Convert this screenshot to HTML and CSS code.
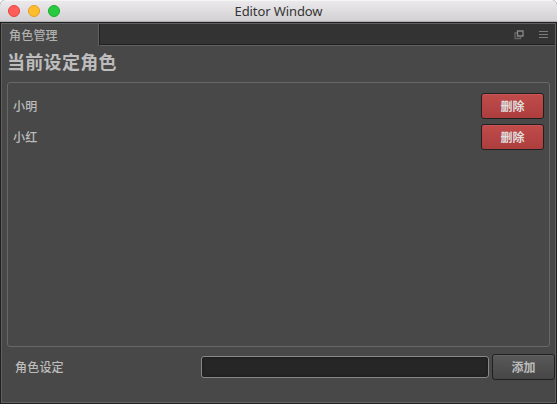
FILE: index.html
```html
<!DOCTYPE html>
<html lang="zh-CN">
<head>
<meta charset="utf-8">
<title>Editor Window</title>
<link rel="stylesheet" href="styles.css">
</head>
<body>
<div class="window">
  <header class="titlebar">
    <div class="lights"><i class="light close"></i><i class="light minimize"></i><i class="light maximize"></i></div>
    <span class="title">Editor Window</span>
  </header>
  <main class="dock">
    <nav class="tabs">
      <div class="tab">角色管理</div>
      <div class="tools">
        <svg width="10" height="10" viewBox="0 0 10 10" fill="none"><path d="M3 3H1V8.5H6.5V7" stroke="#646464" stroke-width="1.3"/><path d="M3.5 1H9V6H3.5Z" stroke="#888" stroke-width="1.3"/></svg>
        <svg width="9" height="8" viewBox="0 0 9 8"><path d="M0 .5H9M0 3.5H9M0 6.5H9" stroke="#7c7c7c"/></svg>
      </div>
    </nav>
    <section class="panel">
      <h1>当前设定角色</h1>
      <ul class="list">
        <li><span>小明</span><button class="button red">删除</button></li>
        <li><span>小红</span><button class="button red">删除</button></li>
      </ul>
      <div class="form">
        <label for="role">角色设定</label>
        <input id="role" type="text">
        <button class="button">添加</button>
      </div>
    </section>
  </main>
</div>
</body>
</html>
```
FILE: styles.css
```css
* { box-sizing: border-box; }
body {
  margin: 0;
  background: #fff;
  font: 12px/18px "Noto Sans CJK SC", sans-serif;
  letter-spacing: .2px;
  color: #bdbdbd;
}
.window {
  width: 557px;
  height: 404px;
  display: flex;
  flex-direction: column;
  border-radius: 5px 5px 0 0;
  overflow: hidden;
  background: #202020;
}
.titlebar {
  height: 22px;
  display: grid;
  grid-template-columns: 74px 1fr 74px;
  align-items: center;
  background: linear-gradient(#ebe9eb, #d2d0d2);
  border-top: 1px solid #f6f5f6;
  border-bottom: 1px solid #b0aeb0;
}
.lights { display: flex; gap: 8px; padding-left: 8px; margin-top: -1px; }
.light { width: 12px; height: 12px; border-radius: 50%; border: 1px solid; }
.close { background: #ff5f58; border-color: #e2453f; }
.minimize { background: #ffbd2e; border-color: #dfa023; }
.maximize { background: #28ca42; border-color: #1dac2b; }
.title {
  text-align: center;
  font: 13px/20px "Noto Sans", sans-serif;
  letter-spacing: -.1px;
  color: #353535;
  margin-top: -1px;
}
.dock {
  flex: 1;
  display: flex;
  flex-direction: column;
  margin: 1px;
  border: 1px solid #606060;
  background: #484848;
}
.tabs { height: 22px; display: flex; }
.tab {
  width: 97px;
  padding: 2px 0 0 7px;
  border-right: 1px solid #606060;
  color: #b0b0b0;
  font-weight: 500;
  background: #484848;
}
.tools {
  flex: 1;
  display: flex;
  justify-content: flex-end;
  align-items: center;
  gap: 15px;
  padding-right: 7px;
  background: #333;
  border-left: 1px solid #202020;
  border-bottom: 1px solid #606060;
  box-shadow: inset 0 -1px #202020;
}
.panel { flex: 1; display: flex; flex-direction: column; }
h1 {
  height: 36px;
  margin: 0;
  padding-left: 5px;
  font-size: 18px;
  line-height: 31px;
  font-weight: 700;
  letter-spacing: .3px;
}
.list {
  height: 265px;
  margin: 0 5px;
  padding: 10px 5px;
  display: flex;
  flex-direction: column;
  gap: 5px;
  list-style: none;
  border: 1px solid #686868;
  border-radius: 3px;
}
.list li {
  display: flex;
  align-items: center;
  justify-content: space-between;
  font-weight: 500;
}
.button {
  width: 63px;
  height: 26px;
  padding: 0;
  border: 1px solid #202020;
  border-radius: 3px;
  background: linear-gradient(#595959, #464646);
  box-shadow: inset 0 1px #626262;
  color: #bdbdbd;
  font: 700 12px/18px "Noto Sans CJK SC", sans-serif;
}
.red {
  background: linear-gradient(#c14b4b, #ad3e3e);
  box-shadow: inset 0 1px #c95656;
  color: #dedede;
}
.form {
  display: flex;
  align-items: center;
  height: 26px;
  margin-top: 7px;
  padding-left: 13px;
}
.form label { width: 186px; font-weight: 500; }
input {
  width: 288px;
  height: 22px;
  margin-right: 3px;
  border: 1px solid #888;
  border-radius: 3px;
  background: #262626;
  box-shadow: inset 0 0 3px #181818;
  color: #bdbdbd;
}
```
